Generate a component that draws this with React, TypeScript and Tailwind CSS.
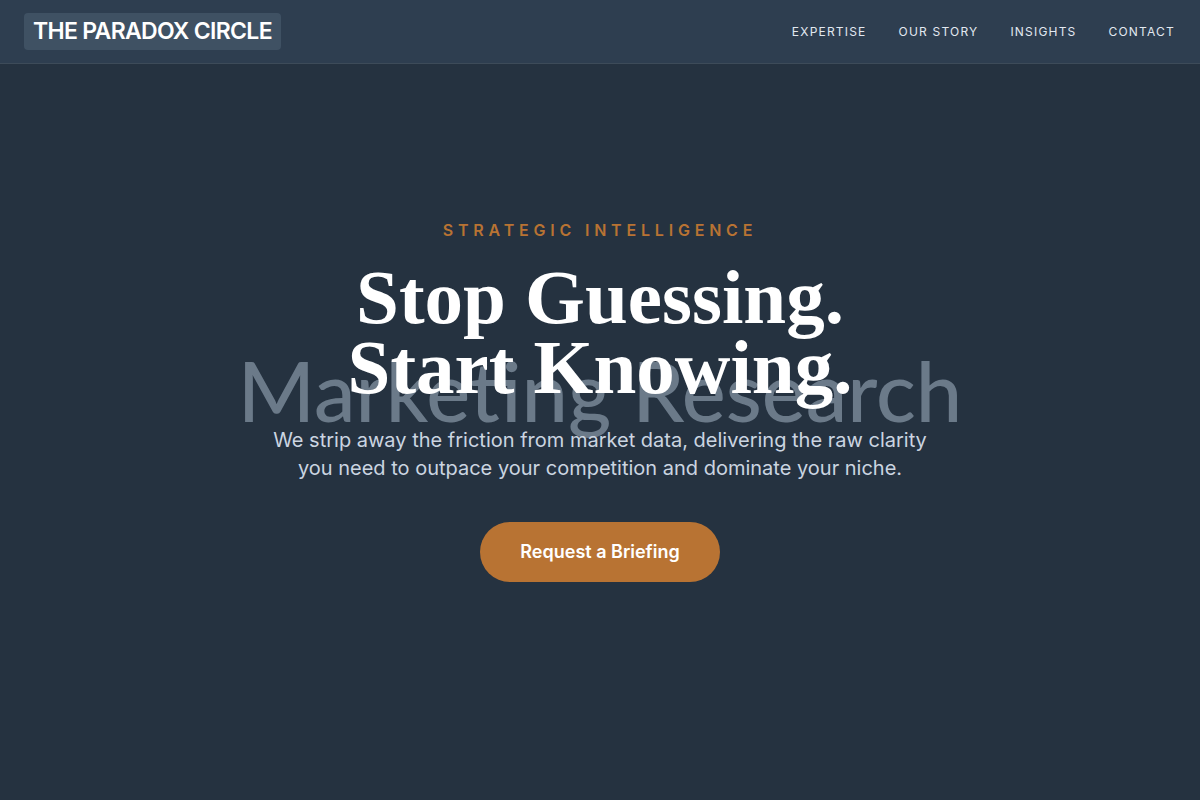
import React from "react";

export default function App() {
  const nav = ["EXPERTISE", "OUR STORY", "INSIGHTS", "CONTACT"];
  return (
    <div className="flex h-[800px] w-full flex-col bg-[#253240]" style={{ fontFamily: "Inter, 'Noto Sans', sans-serif" }}>
      <header className="flex h-16 shrink-0 items-center justify-between border-b border-[#3d4b59] bg-[#2e3e50] pl-6 pr-[25px]">
        <div className="flex h-[37px] items-center rounded-[4px] bg-[#3f5163] px-[9px]">
          <span className="text-[23px] font-semibold tracking-[-0.03em] text-white">THE PARADOX CIRCLE</span>
        </div>
        <nav className="flex items-center gap-8">
          {nav.map((n) => (
            <a key={n} className="text-[12px] font-normal tracking-[0.1em] text-[#e2e8f0]">
              {n}
            </a>
          ))}
        </nav>
      </header>
      <main className="flex flex-1 flex-col items-center justify-center pb-[62px]">
        <p className="text-[16px] font-semibold leading-5 tracking-[0.3em] text-[#b87333]">STRATEGIC INTELLIGENCE</p>
        <div className="relative mt-[22px] flex flex-col items-center">
          <span
            className="pointer-events-none absolute left-1/2 top-[87px] -translate-x-1/2 whitespace-nowrap text-[83px] font-medium leading-none text-[#6b7a89]"
            style={{ fontFamily: "Lato, 'Noto Sans', sans-serif" }}
          >
            Marketing Research
          </span>
          <h1
            className="relative text-center text-[77px] font-bold leading-[70px] text-white"
            style={{ fontFamily: "'Liberation Serif', 'DejaVu Serif', serif" }}
          >
            Stop Guessing.
            <br />
            Start Knowing.
          </h1>
        </div>
        <p className="relative mt-6 max-w-2xl text-center text-[20px] leading-7 text-[#cbd5e1]">
          We strip away the friction from market data, delivering the raw clarity you need to outpace your competition and dominate your niche.
        </p>
        <button className="mt-10 rounded-full bg-[#b87333] px-10 py-[19px] text-[18px] font-semibold leading-[22px] text-white">
          Request a Briefing
        </button>
      </main>
    </div>
  );
}
